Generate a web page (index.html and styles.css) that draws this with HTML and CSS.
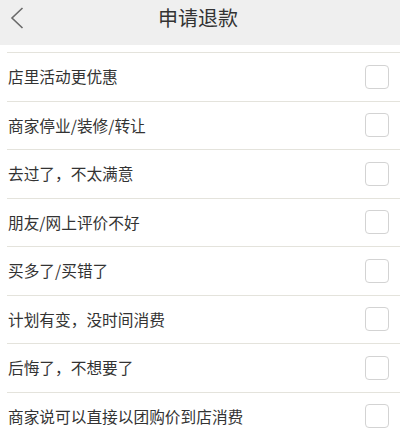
FILE: index.html
```html
<!DOCTYPE html>
<html lang="zh-CN">
<head>
<meta charset="utf-8">
<title>申请退款</title>
<link rel="stylesheet" href="styles.css">
</head>
<body>
<header class="topbar">
  <span class="back">
    <svg width="14" height="22" viewBox="0 0 14 22"><path d="M12.5 1 L2 11 L12.5 21" fill="none" stroke="#6a6a6a" stroke-width="1.6"/></svg>
  </span>
  <h1 class="title">申请退款</h1>
</header>
<ul class="reasons">
  <li class="reason"><span class="label">店里活动更优惠</span><span class="box"></span></li>
  <li class="reason"><span class="label">商家停业/装修/转让</span><span class="box"></span></li>
  <li class="reason"><span class="label">去过了，不太满意</span><span class="box"></span></li>
  <li class="reason"><span class="label">朋友/网上评价不好</span><span class="box"></span></li>
  <li class="reason"><span class="label">买多了/买错了</span><span class="box"></span></li>
  <li class="reason"><span class="label">计划有变，没时间消费</span><span class="box"></span></li>
  <li class="reason"><span class="label">后悔了，不想要了</span><span class="box"></span></li>
  <li class="reason"><span class="label">商家说可以直接以团购价到店消费</span><span class="box"></span></li>
</ul>
</body>
</html>
```
FILE: styles.css
```css
html, body {
  margin: 0;
  padding: 0;
  background: #fff;
  font-family: "Noto Sans CJK SC", "Noto Sans", sans-serif;
  color: #333;
  overflow: hidden;
}
.topbar {
  position: relative;
  height: 45px;
  background: #efefef;
  display: flex;
  justify-content: center;
  align-items: flex-start;
}
.back {
  position: absolute;
  left: 10px;
  top: 7px;
  line-height: 0;
}
.title {
  margin: 0;
  font-size: 20px;
  font-weight: 400;
  line-height: 36px;
  color: #333;
  margin-left: -4px;
}
.reasons {
  list-style: none;
  margin: 0 0 0 7px;
  padding: 7px 0 0 0;
}
.reason {
  box-sizing: border-box;
  height: 48.5px;
  border-top: 1px solid #e4e3dc;
  display: flex;
  align-items: center;
  justify-content: space-between;
  padding: 0 11px 0 1px;
}
.label {
  font-size: 15.7px;
  color: #333;
}
.box {
  box-sizing: border-box;
  width: 24px;
  height: 24px;
  border: 1.5px solid #d3d3d3;
  border-radius: 4px;
  background: #fff;
}
```
